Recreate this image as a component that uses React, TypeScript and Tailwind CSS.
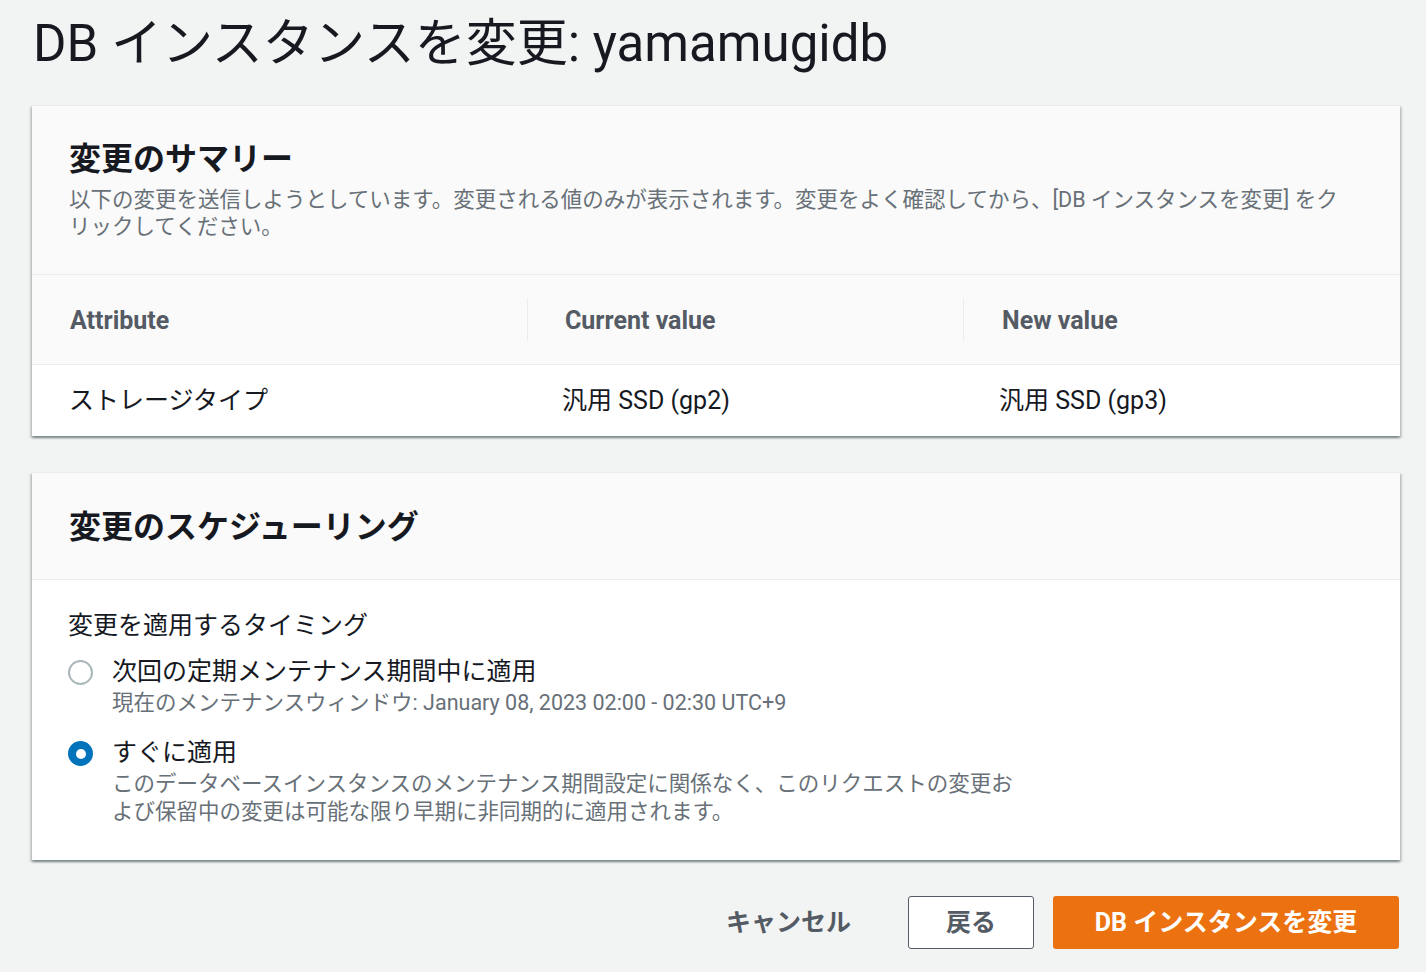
// DB instance modify confirmation page (RDS console style)

const FONT = { fontFamily: 'Roboto, "Noto Sans CJK JP", sans-serif' };

const cardShadow =
  'shadow-[0_2px_2px_0_rgba(0,28,36,0.3),2px_2px_2px_0_rgba(0,28,36,0.15),-2px_2px_2px_0_rgba(0,28,36,0.15)]';

function Radio({ checked }: { checked: boolean }) {
  if (checked) {
    return (
      <span className="mt-[5px] flex h-[25px] w-[25px] shrink-0 items-center justify-center rounded-full bg-[#0073bb]">
        <span className="h-[10px] w-[10px] rounded-full bg-white" />
      </span>
    );
  }
  return <span className="mt-[5px] h-[25px] w-[25px] shrink-0 rounded-full border-2 border-[#aab7b8] bg-white" />;
}

function RadioOption({
  checked,
  label,
  children,
}: {
  checked: boolean;
  label: string;
  children: React.ReactNode;
}) {
  return (
    <div className="flex gap-[19px]">
      <Radio checked={checked} />
      <div>
        <div className="text-[25px] leading-[34px] text-[#16191f]">{label}</div>
        <div className="text-[21.5px] leading-[28px] text-[#687078]">{children}</div>
      </div>
    </div>
  );
}

export default function App() {
  return (
    <div className="min-h-[972px] bg-[#f2f3f3] pl-[32px] pt-[14px]" style={FONT}>
      <h1 className="pl-px text-[51px] leading-[60px] text-[#16191f]">
        DB インスタンスを変更: yamamugidb
      </h1>

      {/* Summary of changes */}
      <div className={`mt-[31px] w-[1368px] border-t border-[#eaeded] bg-white ${cardShadow}`}>
        <div className="border-b border-[#eaeded] bg-[#fafafa] px-[37px] pb-[34px] pt-[33px]">
          <h2 className="text-[32px] font-bold leading-[40px] text-[#16191f]">変更のサマリー</h2>
          <p className="mt-[7px] text-[21.5px] leading-[27px] text-[#687078]">
            以下の変更を送信しようとしています。変更される値のみが表示されます。変更をよく確認してから、[DB インスタンスを変更] をク
            <br />
            リックしてください。
          </p>
        </div>

        <div className="grid grid-cols-[495px_436px_1fr] border-b border-[#eaeded] bg-[#fafafa]">
          <div className="flex h-[89px] items-center pl-[38px] pt-[2px] text-[25px] font-bold text-[#545b64]">Attribute</div>
          <div className="flex h-[89px] items-center">
            <span className="h-[43px] w-px bg-[#eaeded]" />
            <span className="pl-[37px] pt-[2px] text-[25px] font-bold text-[#545b64]">Current value</span>
          </div>
          <div className="flex h-[89px] items-center">
            <span className="h-[43px] w-px bg-[#eaeded]" />
            <span className="pl-[38px] pt-[2px] text-[25px] font-bold text-[#545b64]">New value</span>
          </div>
        </div>

        <div className="grid h-[71px] grid-cols-[495px_436px_1fr] items-center text-[25px] text-[#16191f]">
          <div className="pl-[37px]">ストレージタイプ</div>
          <div className="pl-[35px]">汎用 SSD (gp2)</div>
          <div className="pl-[36px]">汎用 SSD (gp3)</div>
        </div>
      </div>

      {/* Scheduling */}
      <div className={`mt-[36px] w-[1368px] border-t border-[#eaeded] bg-white ${cardShadow}`}>
        <div className="border-b border-[#eaeded] bg-[#fafafa] px-[37px] pb-[32px] pt-[34px]">
          <h2 className="text-[32px] font-bold leading-[40px] text-[#16191f]">変更のスケジューリング</h2>
        </div>
        <div className="px-[36px] pb-[34px] pt-[28px]">
          <div className="text-[25px] leading-[36px] text-[#16191f]">変更を適用するタイミング</div>
          <div className="mt-[11px] flex flex-col gap-[19px]">
            <RadioOption checked={false} label="次回の定期メンテナンス期間中に適用">
              現在のメンテナンスウィンドウ: January 08, 2023 02:00 - 02:30 UTC+9
            </RadioOption>
            <RadioOption checked label="すぐに適用">
              このデータベースインスタンスのメンテナンス期間設定に関係なく、このリクエストの変更お
              <br />
              よび保留中の変更は可能な限り早期に非同期的に適用されます。
            </RadioOption>
          </div>
        </div>
      </div>

      {/* Actions */}
      <div className="mt-[36px] flex w-[1367px] items-center justify-end gap-[19px]">
        <button type="button" className="h-[53px] px-[38px] text-[25px] font-bold text-[#545b64]">
          キャンセル
        </button>
        <button
          type="button"
          className="h-[53px] w-[126px] rounded-[3px] border border-[#545b64] bg-white text-[25px] font-bold text-[#545b64]"
        >
          戻る
        </button>
        <button
          type="button"
          className="h-[53px] w-[346px] rounded-[3px] bg-[#ec7211] text-[25px] font-bold text-white"
        >
          DB インスタンスを変更
        </button>
      </div>
    </div>
  );
}
